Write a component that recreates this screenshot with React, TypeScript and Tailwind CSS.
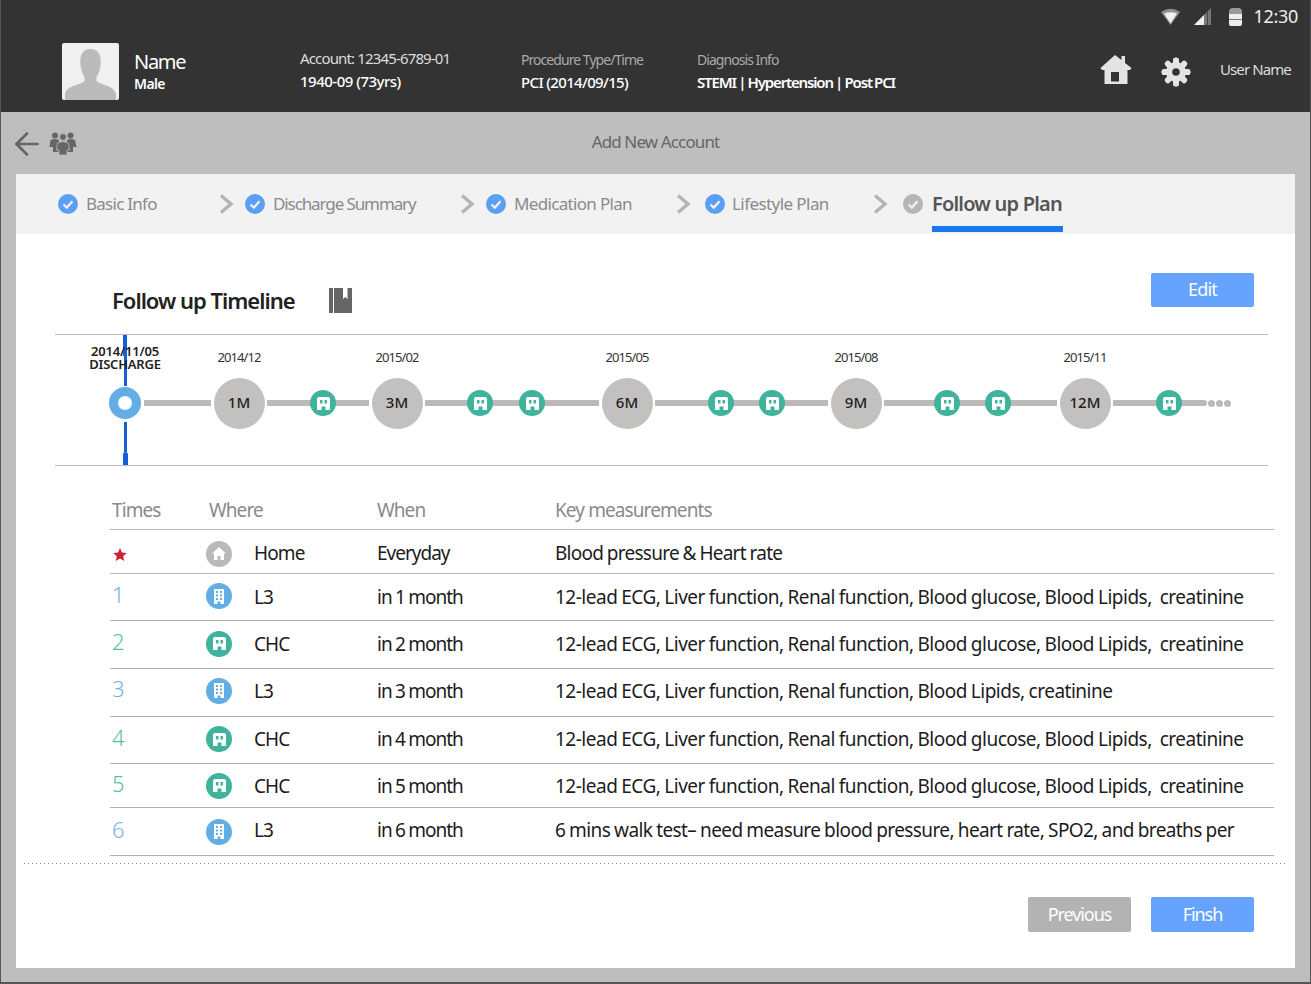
import React from "react";
import { ArrowLeft } from "lucide-react";

const font = "font-['Noto_Sans','Liberation_Sans',sans-serif]";

function WifiIcon() {
  return (
    <svg width="19" height="17" viewBox="0 0 19 17" className="shrink-0">
      <path d="M0 4 Q9.5 -2.5 19 4 L9.5 17 Z" fill="#8f8f8f" />
      <path d="M3 5.5 Q9.5 3 16 5.5 L9.5 15.5 Z" fill="#f0f0f0" />
    </svg>
  );
}

function SignalIcon() {
  return (
    <svg width="18" height="17" viewBox="0 0 18 17" className="ml-[14px] shrink-0">
      <path d="M0 17 L17 0 V17 Z" fill="#777" />
      <path d="M0 17 L10 7 V17 Z" fill="#f0f0f0" />
      <rect x="13" y="4" width="1" height="13" fill="#444" />
    </svg>
  );
}

function BatteryIcon() {
  return (
    <svg width="13" height="18" viewBox="0 0 13 18" className="ml-[17px] shrink-0">
      <path d="M0 4 Q0 0 4 0 H9 Q13 0 13 4 V8 H0 Z" fill="#9a9a9a" />
      <path d="M0 6 H13 V16 Q13 18 11 18 H2 Q0 18 0 16 Z" fill="#ededed" />
      <rect x="0" y="11" width="13" height="1" fill="#777" />
    </svg>
  );
}

function HomeIcon() {
  return (
    <svg width="32" height="31" viewBox="0 0 32 31" className="shrink-0">
      <path
        fillRule="evenodd"
        d="M15 0 L21.5 5 V1 H25 V8 L31.5 13 L30 15 H27.5 V29 H4.5 V15 H2 L0.5 13 Z M11 17 V26.5 H19 V17 Z"
        fill="#e4e4e4"
      />
    </svg>
  );
}

function GearIcon() {
  return (
    <svg width="30" height="30" viewBox="0 0 30 30" className="ml-[29px] shrink-0">
      <g fill="#e4e4e4">
        <rect x="12" y="0.5" width="6" height="29" rx="2.6" />
        <rect x="12" y="0.5" width="6" height="29" rx="2.6" transform="rotate(45 15 15)" />
        <rect x="12" y="0.5" width="6" height="29" rx="2.6" transform="rotate(90 15 15)" />
        <rect x="12" y="0.5" width="6" height="29" rx="2.6" transform="rotate(135 15 15)" />
        <circle cx="15" cy="15" r="10" />
      </g>
      <circle cx="15" cy="15" r="3.8" fill="#333" />
    </svg>
  );
}

function PeopleIcon() {
  return (
    <svg width="28" height="23" viewBox="0 0 28 23" fill="#666">
      <circle cx="6" cy="3.5" r="3" />
      <circle cx="21.5" cy="3.5" r="3" />
      <path d="M1.5 8 Q6 6 10 8 V20 H4 V15 H0.5 Z" />
      <path d="M18 8 Q22 6 26 8 L27.5 15 H24 V20 H18 Z" />
      <circle cx="14" cy="5" r="3.4" stroke="#bebebe" strokeWidth="0.8" />
      <path d="M8.5 11 Q14 8 19.5 11 L20.5 18 H18 V23 H10 V18 H7.5 Z" stroke="#bebebe" strokeWidth="0.8" />
    </svg>
  );
}

function CheckDot({ gray }: { gray?: boolean }) {
  return (
    <svg width="20" height="20" viewBox="0 0 20 20" className="shrink-0">
      <circle cx="10" cy="10" r="10" fill={gray ? "#b5b5b5" : "#5b9ff2"} />
      <path d="M5.5 10.5 L8.8 13.6 L14.5 7.2" fill="none" stroke="#f2f2f2" strokeWidth="2.2" />
    </svg>
  );
}

function Chevron() {
  return (
    <svg width="16" height="20" viewBox="0 0 16 20" className="shrink-0">
      <path d="M2 1.5 L12 10 L2 18.5" fill="none" stroke="#b4b4b4" strokeWidth="3.4" />
    </svg>
  );
}

function ClinicGlyph() {
  return (
    <svg width="13" height="13" viewBox="0 0 13 13">
      <path
        fillRule="evenodd"
        d="M2 0 H11 Q13 0 13 2 V13 H8.5 V9.5 H4.5 V13 H0 V2 Q0 0 2 0 Z M3 3 V6.5 H5.5 V3 Z M7.5 3 V6.5 H10 V3 Z"
        fill="#fff"
      />
    </svg>
  );
}

function TowerGlyph() {
  return (
    <svg width="12" height="15" viewBox="0 0 12 15">
      <path d="M1 0 H11 V15 H7.5 V12.5 H4.5 V15 H1 Z" fill="#fff" />
      <g fill="#62ade3">
        <rect x="3" y="2" width="2" height="2" />
        <rect x="7" y="2" width="2" height="2" />
        <rect x="3" y="5.5" width="2" height="2" />
        <rect x="7" y="5.5" width="2" height="2" />
        <rect x="3" y="9" width="2" height="2" />
        <rect x="7" y="9" width="2" height="2" />
      </g>
    </svg>
  );
}

function HouseGlyph() {
  return (
    <svg width="14" height="13" viewBox="0 0 14 13">
      <path d="M7 0 L14 6.5 H12 V13 H8.5 V9 H5.5 V13 H2 V6.5 H0 Z" fill="#fff" />
    </svg>
  );
}

function PlaceIcon({ kind }: { kind: string }) {
  if (kind === "home") {
    return (
      <div className="flex h-[26px] w-[26px] items-center justify-center rounded-full bg-[#b9b9b9]">
        <HouseGlyph />
      </div>
    );
  }
  if (kind === "L3") {
    return (
      <div className="flex h-[26px] w-[26px] items-center justify-center rounded-full bg-[#62ade3]">
        <TowerGlyph />
      </div>
    );
  }
  return (
    <div className="flex h-[26px] w-[26px] items-center justify-center rounded-full bg-[#3fb39b]">
      <ClinicGlyph />
    </div>
  );
}

function Big({ label, date }: { label: string; date: string }) {
  return (
    <div className="relative mx-[2.5px] flex h-[51px] w-[51px] shrink-0 items-center justify-center rounded-full bg-[#c3c1bf] pb-[2px] text-[15px] font-medium text-[#222]">
      {label}
      <span className="absolute -top-[30px] left-1/2 -translate-x-1/2 whitespace-nowrap text-[13px] font-normal tracking-[-0.9px] text-[#333]">
        {date}
      </span>
    </div>
  );
}

function Teal() {
  return (
    <div className="z-10 -mx-[1px] flex h-[26px] w-[26px] shrink-0 items-center justify-center rounded-full bg-[#3fb39b]">
      <ClinicGlyph />
    </div>
  );
}

function Timeline() {
  const seg = "h-[6px] shrink-0 bg-[#bcbab8]";
  return (
    <div className="relative h-[132px] border-y border-[#bdbdbd]">
      {/* blue "today" marker, sits behind the date text */}
      <div className="absolute left-[68px] top-0 h-[21px] w-[4px] bg-[#1560d4]" />
      <div className="absolute left-[68.5px] top-[20px] h-[31px] w-[3px] bg-[#1560d4]" />
      <div className="absolute left-[68.5px] top-[87px] h-[30px] w-[3px] bg-[#1560d4]" />
      <div className="absolute left-[67.5px] top-[117px] h-[13px] w-[5px] rounded-t-sm bg-[#1560d4]" />

      <div className="absolute left-[34px] top-[10px] w-[72px] whitespace-nowrap text-center text-[13px] font-semibold leading-[13px] tracking-[-0.2px] text-[#222]">
        <div>2014/11/05</div>
        <div>DISCHARGE</div>
      </div>

      <div className="flex h-[52px] translate-y-[42px] items-center pl-[54px]">
        <div className="mr-[3px] flex h-[32px] w-[32px] shrink-0 items-center justify-center rounded-full bg-[#62ade3]">
          <div className="h-[14px] w-[14px] rounded-full bg-white" />
        </div>
        <div className={`${seg} w-[67px]`} />
        <Big label="1M" date="2014/12" />
        <div className={`${seg} w-[44px]`} />
        <Teal />
        <div className={`${seg} w-[34px]`} />
        <Big label="3M" date="2015/02" />
        <div className={`${seg} w-[43px]`} />
        <Teal />
        <div className={`${seg} w-[28px]`} />
        <Teal />
        <div className={`${seg} w-[55px]`} />
        <Big label="6M" date="2015/05" />
        <div className={`${seg} w-[54px]`} />
        <Teal />
        <div className={`${seg} w-[27px]`} />
        <Teal />
        <div className={`${seg} w-[44px]`} />
        <Big label="9M" date="2015/08" />
        <div className={`${seg} w-[51px]`} />
        <Teal />
        <div className={`${seg} w-[27px]`} />
        <Teal />
        <div className={`${seg} w-[47px]`} />
        <Big label="12M" date="2015/11" />
        <div className={`${seg} w-[44px]`} />
        <Teal />
        <div className={`${seg} w-[26px] rounded-r-full`} />
        <div className="ml-[1px] flex gap-[1px]">
          <div className="h-[7px] w-[7px] rounded-full bg-[#bcbab8]" />
          <div className="h-[7px] w-[7px] rounded-full bg-[#bcbab8]" />
          <div className="h-[7px] w-[7px] rounded-full bg-[#bcbab8]" />
        </div>
      </div>
    </div>
  );
}

const fullPanel =
  "12-lead ECG, Liver function, Renal function, Blood glucose, Blood Lipids,  creatinine";

const rows = [
  { n: "", color: "", kind: "home", place: "Home", when: "Everyday", key: "Blood pressure & Heart rate", h: "h-[44px] pt-[4px]", kt: "tracking-[-0.75px]", nudge: "" },
  { n: "1", color: "text-[#72b3df]", kind: "L3", place: "L3", when: "in 1 month", key: fullPanel, h: "h-[47px] pb-[2px]", kt: "tracking-[-0.5px]", nudge: "translate-y-[1px]" },
  { n: "2", color: "text-[#58bda6]", kind: "CHC", place: "CHC", when: "in 2 month", key: fullPanel, h: "h-[48px] pb-[2px]", kt: "tracking-[-0.5px]", nudge: "translate-y-[1px]" },
  { n: "3", color: "text-[#72b3df]", kind: "L3", place: "L3", when: "in 3 month", key: "12-lead ECG, Liver function, Renal function, Blood Lipids, creatinine", h: "h-[48px] pb-[4px]", kt: "tracking-[-0.5px]", nudge: "translate-y-[1px]" },
  { n: "4", color: "text-[#58bda6]", kind: "CHC", place: "CHC", when: "in 4 month", key: fullPanel, h: "h-[47px] pb-[2px]", kt: "tracking-[-0.5px]", nudge: "" },
  { n: "5", color: "text-[#58bda6]", kind: "CHC", place: "CHC", when: "in 5 month", key: fullPanel, h: "h-[44px]", kt: "tracking-[-0.5px]", nudge: "translate-y-[1px]" },
  { n: "6", color: "text-[#72b3df]", kind: "L3", place: "L3", when: "in 6 month", key: "6 mins walk test– need measure blood pressure, heart rate, SPO2, and breaths per", h: "h-[48px]", kt: "tracking-[-0.6px]", nudge: "-translate-y-[1px]" },
];

function Star() {
  return (
    <svg width="14" height="13" viewBox="0 0 24 23" className="ml-[1px] translate-y-[3px]">
      <path d="M12 0 L15.5 8 L24 8.8 L17.6 14.5 L19.5 23 L12 18.5 L4.5 23 L6.4 14.5 L0 8.8 L8.5 8 Z" fill="#cf2236" />
    </svg>
  );
}

function FollowUpTable() {
  return (
    <div className="ml-[94px] mr-[21px] mt-[24px]">
      <div className="flex h-[40px] items-center border-b border-[#b5b5b5] pt-[2px] text-[19px] tracking-[-0.9px] text-[#8a8a8a]">
        <div className="w-[99px] shrink-0 pl-[2px]">Times</div>
        <div className="w-[168px] shrink-0">Where</div>
        <div className="w-[178px] shrink-0">When</div>
        <div>Key measurements</div>
      </div>
      {rows.map((r) => (
        <div key={r.when} className={`flex items-center border-b border-[#b5b5b5] text-[19px] text-[#1c1c1c] [word-spacing:-0.5px] ${r.h}`}>
          <div className={`w-[96px] shrink-0 pl-[2px] text-[22px] font-light -translate-y-[2px] ${r.color}`}>
            {r.n || <Star />}
          </div>
          <div className="w-[48px] shrink-0">
            <PlaceIcon kind={r.kind} />
          </div>
          <div className={`w-[123px] shrink-0 tracking-[-0.9px] ${r.nudge}`}>{r.place}</div>
          <div className={`w-[178px] shrink-0 tracking-[-1px] [word-spacing:-0.6px] ${r.nudge}`}>{r.when}</div>
          <div className={`whitespace-pre ${r.kt} ${r.nudge}`}>{r.key}</div>
        </div>
      ))}
    </div>
  );
}

export default function App() {
  return (
    <div className={`${font} flex h-[984px] w-[1311px] flex-col overflow-hidden border-x border-b-2 border-[#555] bg-[#bebebe]`}>
      <header className="h-[112px] shrink-0 bg-[#333] text-white">
        <div className="flex h-[32px] items-center justify-end pr-[12px] pt-[1px]">
          <WifiIcon />
          <SignalIcon />
          <BatteryIcon />
          <span className="ml-[11px] text-[18px] tracking-[-0.3px] text-[#eee]">12:30</span>
        </div>
        <div className="flex items-center pl-[61px] pt-[11px]">
          <div className="flex h-[57px] w-[57px] shrink-0 items-end justify-center overflow-hidden rounded-[2px] bg-[#f0f0f0]">
            <svg width="53" height="52" viewBox="0 0 53 52">
              <path
                d="M26.5 1 C35 1 37.5 8 36.5 17 C36 23 33.5 27 32.5 29 V33 C36 37 50 37 52 46 V52 H1 V46 C3 37 17 37 20.5 33 V29 C19.5 27 17 23 16.5 17 C15.5 8 18 1 26.5 1 Z"
                fill="#bbb"
              />
            </svg>
          </div>
          <div className="ml-[15px] w-[166px] shrink-0 -translate-y-[2px]">
            <div className="text-[20px] leading-[28px] tracking-[-1.3px]">Name</div>
            <div className="text-[14px] font-semibold leading-[16px] tracking-[-0.6px]">Male</div>
          </div>
          <div className="w-[221px] shrink-0 -translate-y-[2px]">
            <div className="text-[15px] leading-[22px] tracking-[-0.85px] text-[#ddd]">Account: 12345-6789-01</div>
            <div className="text-[15px] font-medium leading-[24px] tracking-[-0.5px]">1940-09 (73yrs)</div>
          </div>
          <div className="w-[176px] shrink-0 -translate-y-[1px]">
            <div className="text-[14px] leading-[22px] tracking-[-0.95px] text-[#aaa]">Procedure Type/Time</div>
            <div className="text-[15px] font-medium leading-[22px] tracking-[-0.65px]">PCI (2014/09/15)</div>
          </div>
          <div className="w-[403px] shrink-0 -translate-y-[1px]">
            <div className="text-[14px] leading-[22px] tracking-[-0.95px] text-[#aaa]">Diagnosis Info</div>
            <div className="text-[15px] font-semibold leading-[22px] tracking-[-1.15px] [word-spacing:-0.5px]">STEMI | Hypertension | Post PCI</div>
          </div>
          <div className="-translate-y-[1px]">
            <HomeIcon />
          </div>
          <GearIcon />
          <div className="ml-[29px] -translate-y-[2px] whitespace-nowrap text-[15px] tracking-[-0.9px] text-[#ddd]">User Name</div>
        </div>
      </header>

      <div className="relative flex h-[62px] shrink-0 -translate-y-[1px] items-center justify-center text-[17px] tracking-[-0.87px] text-[#666]">
        <div className="absolute left-[7.5px] top-[14.5px] flex items-center gap-[4.5px]">
          <ArrowLeft size={36} strokeWidth={1.8} color="#666" />
          <PeopleIcon />
        </div>
        Add New Account
      </div>

      <main className="mx-[15px] flex h-[794px] flex-col bg-white">
        <nav className="flex h-[60px] shrink-0 items-center bg-[#f2f2f2] pl-[42px] text-[17px] text-[#8a8a8a]">
          <div className="flex w-[161px] shrink-0 items-center gap-[8px]">
            <CheckDot />
            <span className="tracking-[-0.74px]">Basic Info</span>
          </div>
          <Chevron />
          <div className="ml-[10px] flex w-[215px] shrink-0 items-center gap-[8px]">
            <CheckDot />
            <span className="tracking-[-1.1px]">Discharge Summary</span>
          </div>
          <Chevron />
          <div className="ml-[10px] flex w-[190px] shrink-0 items-center gap-[8px]">
            <CheckDot />
            <span className="tracking-[-0.67px]">Medication Plan</span>
          </div>
          <Chevron />
          <div className="ml-[13px] flex w-[168px] shrink-0 items-center gap-[7px]">
            <CheckDot />
            <span className="tracking-[-0.57px]">Lifestyle Plan</span>
          </div>
          <Chevron />
          <div className="relative ml-[14px] flex h-full items-center gap-[9px]">
            <CheckDot gray />
            <span className="text-[20px] font-semibold tracking-[-0.8px] text-[#555]">Follow up Plan</span>
            <div className="absolute bottom-[2px] left-[29px] -right-[1px] h-[6px] bg-[#1a78f0]" />
          </div>
        </nav>

        <div className="flex h-[100px] shrink-0 items-start px-[96px]">
          <div className="mt-[50px] flex items-center">
            <h1 className="text-[22px] font-semibold tracking-[-1px] text-[#222]">Follow up Timeline</h1>
            <svg width="23" height="25" viewBox="0 0 23 25" className="ml-[34px]">
              <path fillRule="evenodd" d="M0 0 H4 V25 H0 Z M5 0 H14 V11 L16.2 9 L18.5 11 V0 H23 V25 H5 Z" fill="#666" />
            </svg>
          </div>
          <button className="ml-auto mr-[-55px] mt-[39px] h-[34px] w-[103px] rounded-[2px] bg-[#66a3ff] pb-[2px] text-[18px] tracking-[-0.8px] text-white">
            Edit
          </button>
        </div>

        <div className="ml-[39px] mr-[27px]">
          <Timeline />
        </div>

        <FollowUpTable />

        <div className="mx-[8px] mt-[7px] h-px shrink-0 bg-[repeating-linear-gradient(90deg,#888_0,#888_1px,transparent_1px,transparent_4px)]" />

        <div className="mt-[33px] flex justify-end gap-[20px] pr-[41px]">
          <button className="h-[35px] w-[103px] rounded-[2px] bg-[#b3b3b3] text-[18px] tracking-[-1.1px] text-white">Previous</button>
          <button className="h-[35px] w-[103px] rounded-[2px] bg-[#66a3ff] text-[18px] tracking-[-1.1px] text-white">Finsh</button>
        </div>
      </main>
    </div>
  );
}
